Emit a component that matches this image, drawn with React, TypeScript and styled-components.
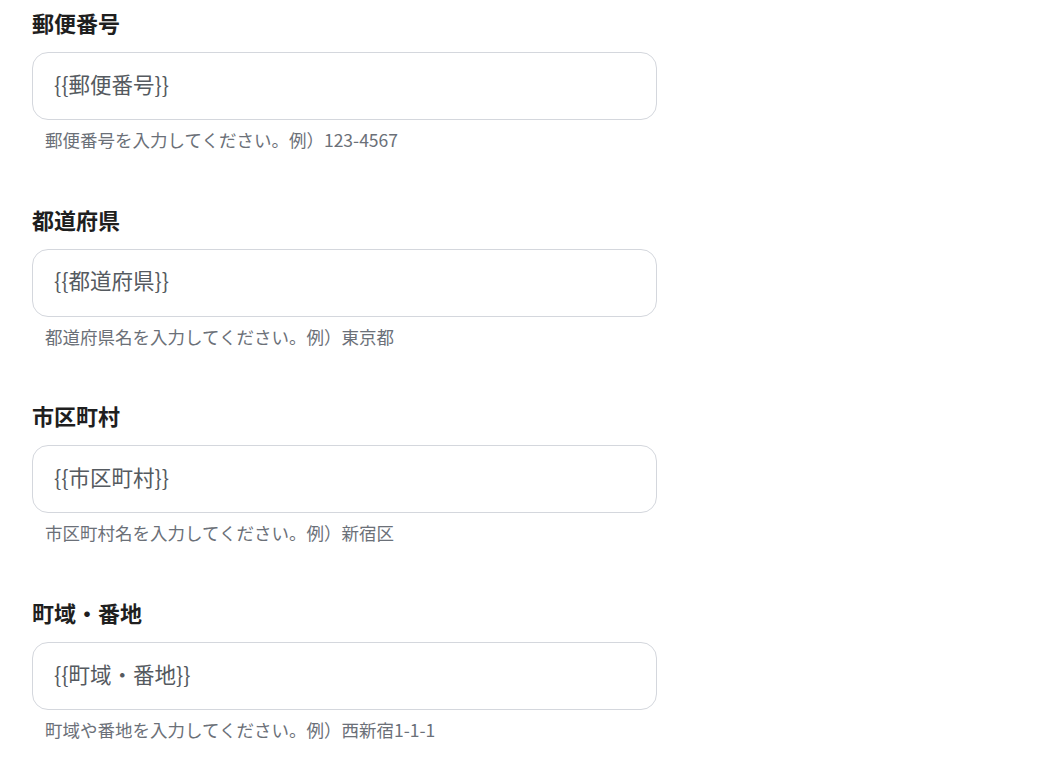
import React from "react";
import styled, { createGlobalStyle } from "styled-components";

const GlobalStyle = createGlobalStyle`
  html, body {
    margin: 0;
    padding: 0;
    background: #ffffff;
  }
  body {
    font-family: "Noto Sans CJK JP", "Noto Sans", sans-serif;
  }
`;

const Page = styled.div`
  display: flex;
  flex-direction: column;
  gap: 50.7px;
  padding: 7px 0 0 32px;
  width: 625px;
`;

const Field = styled.div`
  display: flex;
  flex-direction: column;
`;

const Label = styled.label`
  font-size: 22px;
  line-height: 30px;
  font-weight: 700;
  color: #1f1f1f;
  margin-bottom: 15px;
`;

const InputBox = styled.div`
  box-sizing: border-box;
  height: 68px;
  border: 1px solid #d4d7dd;
  border-radius: 16px;
  display: flex;
  align-items: center;
  padding: 0 21px 6px 21px;
  font-size: 21.5px;
  color: #555a60;
  background: #ffffff;
`;

const Hint = styled.div`
  margin-top: 7px;
  padding-left: 13px;
  font-size: 17.5px;
  line-height: 26px;
  color: #6b7078;
`;

const fields = [
  { label: "郵便番号", value: "{{郵便番号}}", hint: "郵便番号を入力してください。例）123-4567" },
  { label: "都道府県", value: "{{都道府県}}", hint: "都道府県名を入力してください。例）東京都" },
  { label: "市区町村", value: "{{市区町村}}", hint: "市区町村名を入力してください。例）新宿区" },
  { label: "町域・番地", value: "{{町域・番地}}", hint: "町域や番地を入力してください。例）西新宿1-1-1" },
];

export default function App() {
  return (
    <>
      <GlobalStyle />
      <Page>
        {fields.map((f) => (
          <Field key={f.label}>
            <Label>{f.label}</Label>
            <InputBox>{f.value}</InputBox>
            <Hint>{f.hint}</Hint>
          </Field>
        ))}
      </Page>
    </>
  );
}
